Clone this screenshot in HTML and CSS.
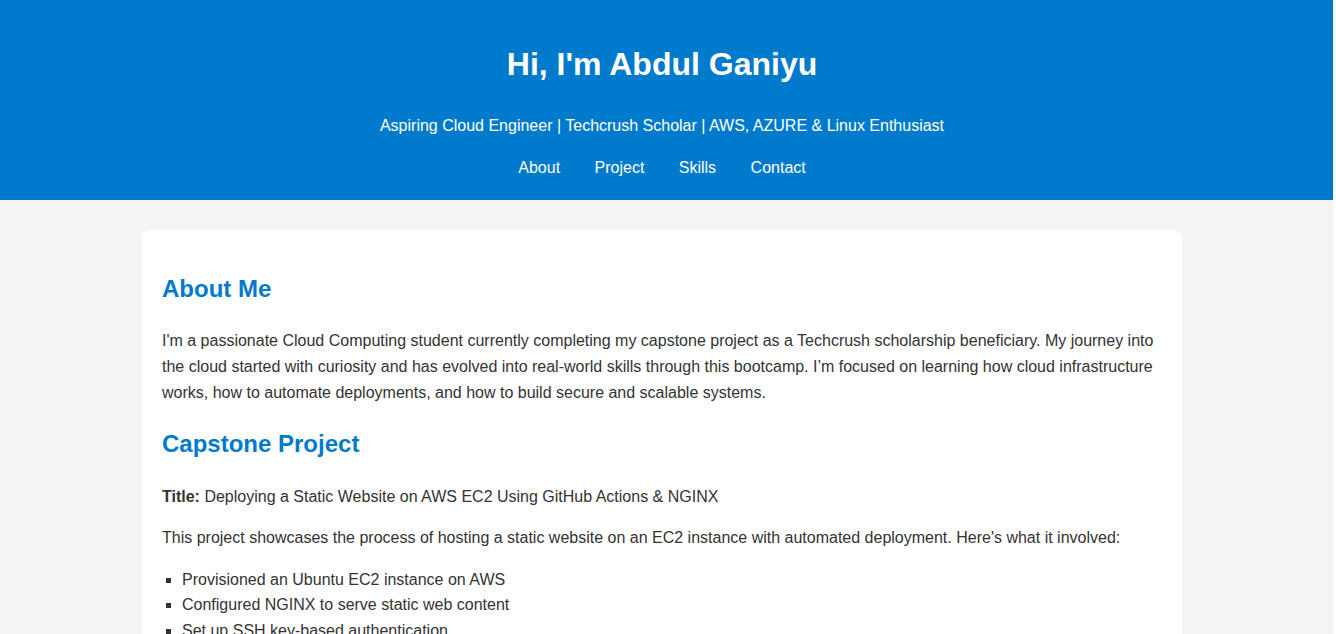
FILE: index.html
```html
<!DOCTYPE html>
<html lang="en">
<head>
<meta charset="UTF-8">
<title>Abdul Ganiyu | Portfolio</title>
<link rel="stylesheet" href="styles.css">
</head>
<body>
<header class="site-header">
  <h1 class="site-title">Hi, I'm Abdul Ganiyu</h1>
  <p class="tagline">Aspiring Cloud Engineer | Techcrush Scholar | AWS, AZURE &amp; Linux Enthusiast</p>
  <nav class="nav">
    <a href="#about">About</a>
    <a href="#project">Project</a>
    <a href="#skills">Skills</a>
    <a href="#contact">Contact</a>
  </nav>
</header>
<main class="main">
  <div class="container">
    <section id="about" class="section">
      <h2 class="section-title">About Me</h2>
      <p>I'm a passionate Cloud Computing student currently completing my capstone project as a Techcrush scholarship beneficiary. My journey into the cloud started with curiosity and has evolved into real-world skills through this bootcamp. I’m focused on learning how cloud infrastructure works, how to automate deployments, and how to build secure and scalable systems.</p>
    </section>
    <section id="project" class="section">
      <h2 class="section-title">Capstone Project</h2>
      <p><strong>Title:</strong> Deploying a Static Website on AWS EC2 Using GitHub Actions &amp; NGINX</p>
      <p>This project showcases the process of hosting a static website on an EC2 instance with automated deployment. Here's what it involved:</p>
      <ul class="list">
        <li>Provisioned an Ubuntu EC2 instance on AWS</li>
        <li>Configured NGINX to serve static web content</li>
        <li>Set up SSH key-based authentication</li>
      </ul>
    </section>
  </div>
</main>
</body>
</html>
```
FILE: styles.css
```css
html {
  background: #ffffff;
}
body {
  margin: 0 3px 0 0;
  background: #f4f4f4;
  font-family: "Liberation Sans", Arial, sans-serif;
  color: #333333;
  line-height: 1.6;
  min-height: 100vh;
}
.site-header {
  background: #007acc;
  color: #ffffff;
  text-align: center;
  padding: 46px 9px 22px 0;
}
.site-title {
  margin: 0;
  font-size: 32px;
  line-height: 37px;
  font-weight: bold;
}
.tagline {
  margin: 33px 0 0;
  font-size: 16px;
  line-height: 20px;
}
.nav {
  margin-top: 22px;
  line-height: 20px;
}
.nav a {
  color: #ffffff;
  text-decoration: none;
  margin: 0 15px;
  font-size: 16px;
}
.main {
  padding: 30px 9px 30px 0;
}
.container {
  max-width: 1000px;
  margin: 0 auto;
  background: #ffffff;
  padding: 20px;
  border-radius: 8px;
}
.section-title {
  color: #007acc;
  font-size: 24px;
  margin: 20px 0;
}
.container p {
  margin: 16px 0;
  font-size: 16px;
}
.list {
  padding-left: 20px;
  list-style: square;
  margin: 16px 0;
}
```
